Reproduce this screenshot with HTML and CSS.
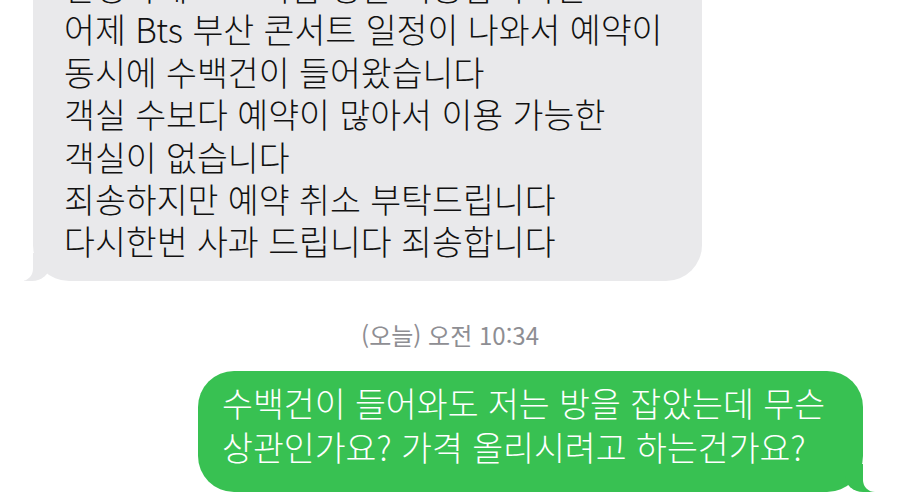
FILE: index.html
```html
<!DOCTYPE html>
<html lang="ko">
<head>
    <meta charset="UTF-8">
    <meta name="viewport" content="width=device-width, initial-scale=1.0">
    <title>메시지</title>
    <link rel="stylesheet" href="styles.css">
</head>
<body>
    <div class="chat">
        <div class="bubble received">
            안녕하세요 고객님 정말 죄송합니다만<br>
            어제 Bts 부산 콘서트 일정이 나와서 예약이<br>
            동시에 수백건이 들어왔습니다<br>
            객실 수보다 예약이 많아서 이용 가능한<br>
            객실이 없습니다<br>
            죄송하지만 예약 취소 부탁드립니다<br>
            다시한번 사과 드립니다 죄송합니다
        </div>

        <div class="timestamp">(오늘) 오전 10:34</div>

        <div class="bubble sent">
            수백건이 들어와도 저는 방을 잡았는데 무슨<br>
            상관인가요? 가격 올리시려고 하는건가요?
        </div>
    </div>
</body>
</html>
```

FILE: styles.css
```css
body {
    margin: 0;
    background: #fff;
    font-family: "Noto Sans CJK KR", "Noto Sans", sans-serif;
    overflow: hidden;
}
.chat {
    display: flex;
    flex-direction: column;
}
.bubble {
    position: relative;
    box-sizing: border-box;
    font-size: 33.6px;
    font-weight: 300;
    border-radius: 36px;
}
.received {
    margin-top: -48px;
    margin-left: 33px;
    width: 669px;
    padding: 14px 10px 18px 31px;
    line-height: 42.4px;
    background: #e9e9eb;
    color: #111;
}
.received::before {
    content: "";
    position: absolute;
    bottom: 0;
    left: -9px;
    width: 26px;
    height: 28px;
    background: #e9e9eb;
    border-bottom-right-radius: 18px 16px;
}
.received::after {
    content: "";
    position: absolute;
    bottom: 0;
    left: -30px;
    width: 30px;
    height: 28px;
    background: #fff;
    border-bottom-right-radius: 12px;
}
.timestamp {
    margin-top: 39px;
    text-align: center;
    font-size: 24px;
    line-height: 30px;
    color: #8e8e93;
}
.sent {
    margin-top: 21px;
    margin-left: auto;
    margin-right: 37px;
    width: 665px;
    padding: 10px 10px 23px 24px;
    line-height: 44px;
    background: #38c152;
    color: #fff;
}
.sent::before {
    content: "";
    position: absolute;
    bottom: 0;
    right: -12px;
    width: 30px;
    height: 28px;
    background: #38c152;
    border-bottom-left-radius: 18px 16px;
}
.sent::after {
    content: "";
    position: absolute;
    bottom: 0;
    right: -30px;
    width: 30px;
    height: 28px;
    background: #fff;
    border-bottom-left-radius: 12px;
}
```
